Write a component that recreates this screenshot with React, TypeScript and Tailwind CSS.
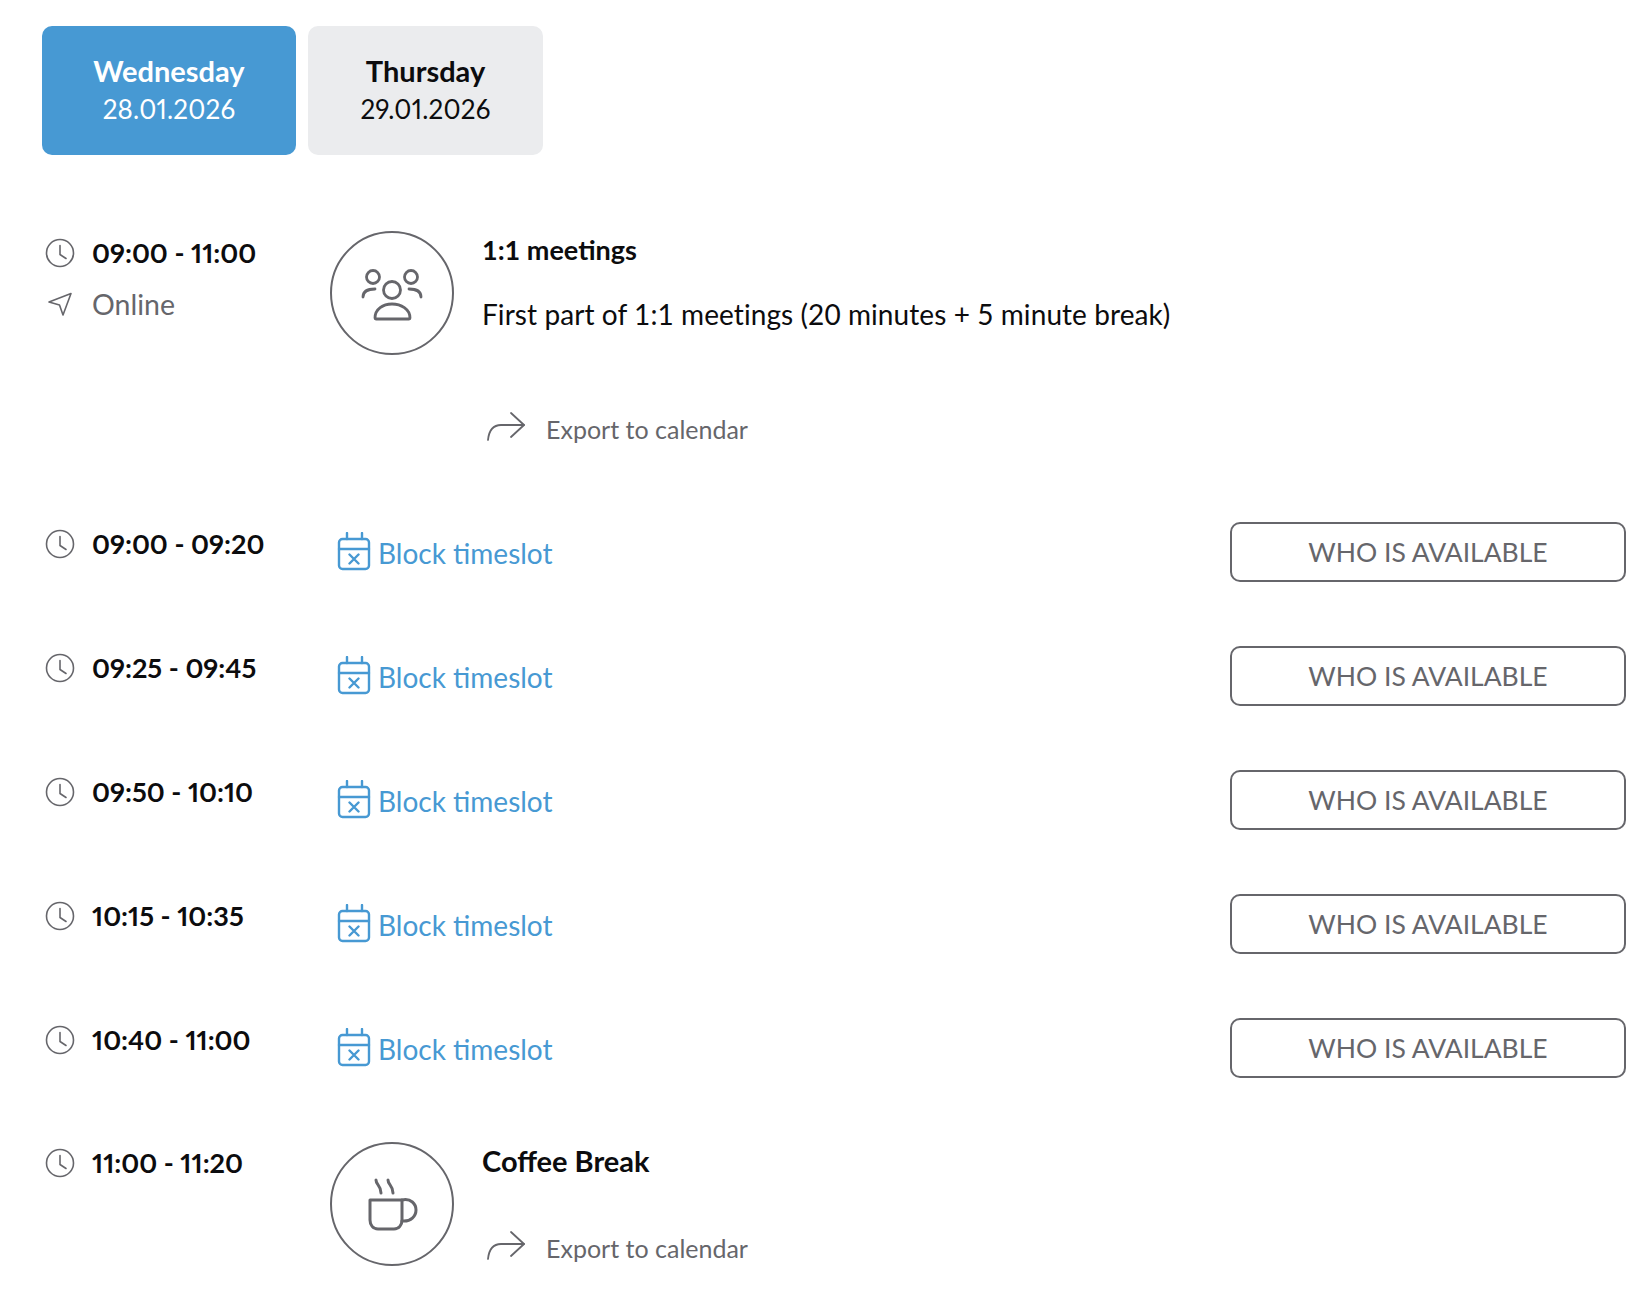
const Clock = () => (
  <svg width="30" height="30" viewBox="0 0 30 30" fill="none" stroke="#66666b" strokeWidth="1.6" strokeLinecap="round" strokeLinejoin="round" className="shrink-0">
    <circle cx="15" cy="15" r="13.5" />
    <path d="M15 7.5V16.5L21 20.5" />
  </svg>
);

const Nav = () => (
  <svg width="30" height="30" viewBox="0 0 30 30" fill="none" stroke="#66666b" strokeWidth="1.6" strokeLinecap="round" strokeLinejoin="round" className="shrink-0">
    <path d="M4 13L26 4.5L18 26L14.5 16Z" />
  </svg>
);

const Arrow = () => (
  <svg width="40" height="32" viewBox="0 0 40 32" fill="none" stroke="#66666b" strokeWidth="1.8" strokeLinecap="round" strokeLinejoin="round" className="shrink-0 -translate-y-[1px]">
    <path d="M1 28C2 18 7 13 14 13H37" />
    <path d="M24 1L37 13L24 25" />
  </svg>
);

const CalendarX = () => (
  <svg width="36" height="40" viewBox="0 0 36 40" fill="none" stroke="#4799d3" strokeWidth="2.4" strokeLinecap="round" strokeLinejoin="round" className="shrink-0">
    <rect x="3" y="7" width="30" height="30" rx="3.5" />
    <path d="M3 17H33M11 1V7M26 1V7M13.5 22.5L22.5 31.5M22.5 22.5L13.5 31.5" />
  </svg>
);

const Users = () => (
  <svg width="80" height="70" viewBox="0 0 80 70" fill="none" stroke="#66666b" strokeWidth="2.8" strokeLinecap="round" strokeLinejoin="round">
    <circle cx="21" cy="19" r="6.5" />
    <circle cx="59" cy="19" r="6.5" />
    <circle cx="40" cy="32" r="8.5" />
    <path d="M11 39C11 33 16 31 23 31" />
    <path d="M57 31C64 31 69 33 69 39" />
    <path d="M23 60C23 51 31 46 40 46C49 46 58 51 58 60C58 60.5 57.5 61 57 61H24C23.5 61 23 60.5 23 60Z" />
  </svg>
);

const Coffee = () => (
  <svg width="60" height="60" viewBox="0 0 60 60" fill="none" stroke="#66666b" strokeWidth="3" strokeLinecap="round" strokeLinejoin="round">
    <path d="M8 26H40V46C40 51 37 55 32 55H16C11 55 8 51 8 46Z" />
    <path d="M40 26C49 24 54 30 54 36C54 42 49 48 40 47" />
    <path d="M14 6C14 11 19 11 19 19" />
    <path d="M26 6C26 11 31 11 31 19" />
  </svg>
);

const Circle = ({ children }: { children: React.ReactNode }) => (
  <div className="flex h-[124px] w-[124px] shrink-0 items-center justify-center rounded-full border-2 border-[#66666b]">
    {children}
  </div>
);

const Export = () => (
  <div className="flex items-center gap-[19px] text-[25px] leading-[30px] text-[#66666b]">
    <Arrow />
    <span>Export to calendar</span>
  </div>
);

const Time = ({ t }: { t: string }) => (
  <div className="flex items-center gap-[17px] pl-[3px]">
    <Clock />
    <span className="text-[27px] leading-[30px] font-bold text-[#0c0c0e] proportional-nums">{t}</span>
  </div>
);

const Slot = ({ t }: { t: string }) => (
  <div className="flex h-[124px] items-start">
    <div className="w-[288px] shrink-0 pt-[7px]">
      <Time t={t} />
    </div>
    <div className="flex flex-1 items-start gap-[6px] pl-[6px] pt-[10px]">
      <CalendarX />
      <span className="pt-[4px] text-[28px] leading-[34px] text-[#4799d3]">Block timeslot</span>
    </div>
    <button className="h-[60px] w-[396px] shrink-0 rounded-[10px] border-2 border-[#66666b] pt-[2px] text-[26.5px] text-[#66666b]">
      WHO IS AVAILABLE
    </button>
  </div>
);

export default function App() {
  return (
    <div className="h-[1292px] overflow-hidden bg-white pl-[42px] pr-[26px] pt-[26px] font-['Lato',sans-serif]">
      <div className="flex gap-[12px]">
        <div className="flex h-[129px] w-[254px] flex-col items-center justify-center rounded-[10px] bg-[#4799d3] pb-[1px] text-white">
          <div className="text-[29px] leading-[38px] font-bold">Wednesday</div>
          <div className="text-[26px] leading-[38px] tracking-[0.2px] proportional-nums">28.01.2026</div>
        </div>
        <div className="flex h-[129px] w-[235px] flex-col items-center justify-center rounded-[10px] bg-[#ebecee] pb-[1px] text-[#0c0c0e]">
          <div className="text-[29px] leading-[38px] font-bold">Thursday</div>
          <div className="text-[26px] leading-[38px] tracking-[0.2px] proportional-nums">29.01.2026</div>
        </div>
      </div>

      <div className="mt-[76px] flex h-[291px] items-start">
        <div className="flex w-[288px] shrink-0 flex-col gap-[21px] pt-[7px]">
          <Time t="09:00 - 11:00" />
          <div className="flex items-center gap-[17px] pl-[3px] text-[28.5px] leading-[30px] text-[#66666b]">
            <Nav />
            <span>Online</span>
          </div>
        </div>
        <Circle>
          <Users />
        </Circle>
        <div className="pl-[28px]">
          <div className="pt-[4px] text-[27px] leading-[30px] font-bold text-[#0c0c0e]">1:1 meetings</div>
          <div className="pt-[34px] text-[28px] leading-[30px] tracking-[0.08px] text-[#0c0c0e]">First part of 1:1 meetings (20 minutes + 5 minute break)</div>
          <div className="pt-[84px] pl-[5px]">
            <Export />
          </div>
        </div>
      </div>

      {["09:00 - 09:20", "09:25 - 09:45", "09:50 - 10:10", "10:15 - 10:35", "10:40 - 11:00"].map((t) => (
        <Slot key={t} t={t} />
      ))}

      <div className="flex items-start">
        <div className="w-[288px] shrink-0 pt-[6px]">
          <Time t="11:00 - 11:20" />
        </div>
        <Circle>
          <Coffee />
        </Circle>
        <div className="pl-[28px]">
          <div className="pt-[4px] text-[29px] leading-[30px] font-bold text-[#0c0c0e]">Coffee Break</div>
          <div className="pt-[56px] pl-[5px]">
            <Export />
          </div>
        </div>
      </div>
    </div>
  );
}
